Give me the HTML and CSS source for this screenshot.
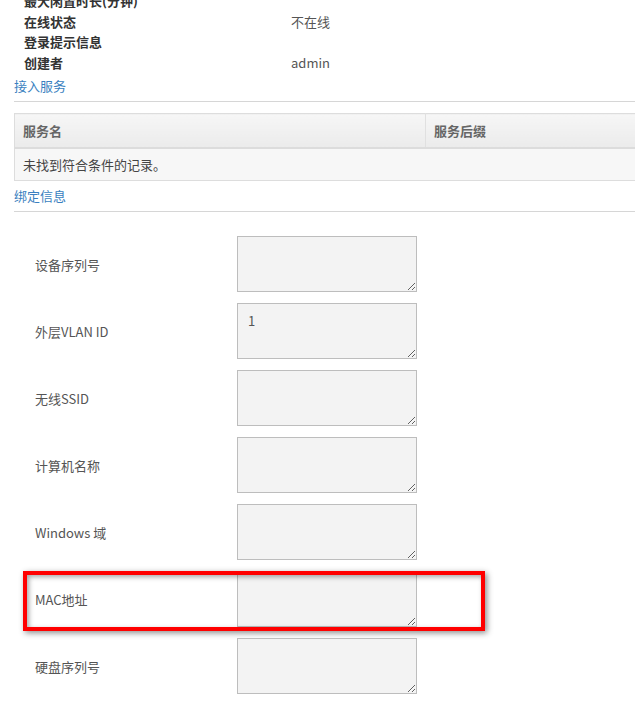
FILE: index.html
```html
<!DOCTYPE html>
<html lang="zh-CN">
<head>
<meta charset="utf-8">
<link rel="stylesheet" href="styles.css">
</head>
<body>
<div class="page">
  <div class="info">
    <div class="info-row"><span class="info-label">最大闲置时长(分钟)</span><span class="info-value"></span></div>
    <div class="info-row"><span class="info-label">在线状态</span><span class="info-value">不在线</span></div>
    <div class="info-row"><span class="info-label">登录提示信息</span><span class="info-value"></span></div>
    <div class="info-row"><span class="info-label">创建者</span><span class="info-value">admin</span></div>
  </div>

  <div class="section-title">接入服务</div>
  <div class="table-wrap">
    <table class="grid">
      <thead>
        <tr><th class="col-name">服务名</th><th>服务后缀</th></tr>
      </thead>
      <tbody>
        <tr><td colspan="2">未找到符合条件的记录。</td></tr>
      </tbody>
    </table>
  </div>

  <div class="section-title">绑定信息</div>
  <div class="form">
    <div class="form-row"><label class="form-label">设备序列号</label><textarea class="field"></textarea></div>
    <div class="form-row"><label class="form-label">外层VLAN ID</label><textarea class="field">1</textarea></div>
    <div class="form-row"><label class="form-label">无线SSID</label><textarea class="field"></textarea></div>
    <div class="form-row"><label class="form-label">计算机名称</label><textarea class="field"></textarea></div>
    <div class="form-row"><label class="form-label">Windows 域</label><textarea class="field"></textarea></div>
    <div class="form-row highlighted"><label class="form-label">MAC地址</label><textarea class="field"></textarea><div class="highlight-box"></div></div>
    <div class="form-row"><label class="form-label">硬盘序列号</label><textarea class="field"></textarea></div>
  </div>
</div>
</body>
</html>
```

FILE: styles.css
```css
html, body {
  margin: 0;
  padding: 0;
  background: #fff;
  overflow: hidden;
}
body {
  font-family: "Microsoft YaHei", "Noto Sans CJK SC", "Noto Sans", sans-serif;
  font-size: 13px;
  color: #333;
}
.page {
  margin-top: -9px;
}
.info {
  padding-left: 24px;
}
.info-row {
  display: flex;
  height: 20.5px;
  line-height: 20px;
}
.info-label {
  width: 267px;
  font-weight: bold;
  color: #333;
}
.info-value {
  color: #555;
}
.section-title {
  margin-left: 14px;
  color: #3a7fc0;
  line-height: 20px;
  padding-top: 3px;
  padding-bottom: 5px;
  border-bottom: 1px solid #d6d6d6;
}
.table-wrap {
  margin: 11px 0 2px 14px;
}
.grid {
  width: 100%;
  border-collapse: collapse;
  border: 1px solid #ddd;
  border-right: none;
}
.grid th {
  text-align: left;
  height: 33px;
  padding: 0 8px;
  color: #666;
  font-weight: bold;
  background: linear-gradient(#f6f6f6, #ebebeb);
  border-bottom: 2px solid #dcdcdc;
  border-right: 1px solid #e0e0e0;
}
.grid th:last-child {
  border-right: none;
}
.grid th.col-name {
  width: 394px;
}
.grid td {
  height: 31px;
  padding: 0 8px;
  background: #f7f7f7;
  color: #444;
  border-bottom: 1px solid #ddd;
}
.form {
  padding: 24px 0 0 35px;
  display: flex;
  flex-direction: column;
  gap: 11px;
}
.form-row {
  position: relative;
  display: flex;
  align-items: center;
  height: 56px;
}
.form-label {
  width: 202px;
  color: #555;
}
.field {
  box-sizing: border-box;
  width: 180px;
  height: 56px;
  margin: 0;
  padding: 7px 10px;
  background: #f3f3f3;
  border: 1px solid #bdbdbd;
  border-radius: 0;
  font-family: "Microsoft YaHei", "Noto Sans CJK SC", sans-serif;
  font-size: 13px;
  color: #555;
  resize: both;
}
.highlight-box {
  position: absolute;
  left: -12px;
  top: 0;
  width: 462px;
  height: 60px;
  box-sizing: border-box;
  border: 4px solid #ff0000;
  box-shadow: 2px 2px 6px rgba(0,0,0,0.45), inset 2px 2px 5px rgba(0,0,0,0.35);
  pointer-events: none;
}
```
